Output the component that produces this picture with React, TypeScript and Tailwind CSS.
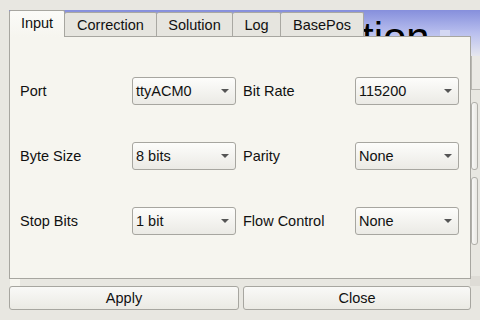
import React from "react";

const tabs = [
  { label: "Input", width: "w-[56px]" },
  { label: "Correction", width: "w-[92px]" },
  { label: "Solution", width: "w-[76px]" },
  { label: "Log", width: "w-[48px]" },
  { label: "BasePos", width: "w-[83px]" },
];

const rows = [
  ["Port", "ttyACM0", "Bit Rate", "115200"],
  ["Byte Size", "8 bits", "Parity", "None"],
  ["Stop Bits", "1 bit", "Flow Control", "None"],
];

function Combo({ value }: { value: string }) {
  return (
    <div className="flex h-[28px] w-[104px] items-center justify-between rounded-[3px] border border-[#a7a6a0] bg-gradient-to-b from-[#fdfdfb] to-[#ebeae5] pl-[3px] pr-[6px]">
      <span className="pt-[1px]">{value}</span>
      <span className="h-0 w-0 border-l-[4px] border-r-[4px] border-t-[4px] border-l-transparent border-r-transparent border-t-[#555]" />
    </div>
  );
}

function Backdrop() {
  // the main window peeking out behind the dialog
  return (
    <div className="absolute inset-0">
      <div className="absolute left-[9px] right-0 top-[10px] h-[46px] bg-gradient-to-b from-[#868fdc] via-[#b9bfee] to-[#e6e7ee]" />
      <div className="absolute left-[440px] top-[30px] h-[18px] w-[10px] bg-[#d4d8f2]" />
      <div className="absolute left-[362px] top-[17px] text-[42px] leading-none text-black">
        tion
      </div>
      <div className="absolute left-[471px] top-[56px] h-[34px] w-[9px] border-b border-l border-[#b9b8b2] bg-[#eae9e4]" />
      <div className="absolute left-[471px] top-[102px] h-[68px] w-[7px] rounded-[3px] border border-[#b0afa9] bg-gradient-to-r from-[#f9f9f7] to-[#e9e8e3]" />
      <div className="absolute left-[471px] top-[177px] h-[68px] w-[7px] rounded-[3px] border border-[#b0afa9] bg-gradient-to-r from-[#f9f9f7] to-[#e9e8e3]" />
      <div className="absolute left-[470px] top-[276px] h-[10px] w-[10px] bg-[#dedcd6]" />
    </div>
  );
}

export default function App() {
  return (
    <div
      className="relative h-[320px] w-[480px] overflow-hidden bg-[#e8e7e1] text-[14.5px] text-[#111]"
      style={{ fontFamily: '"Liberation Sans", Arial, sans-serif' }}
    >
      <Backdrop />

      <div className="absolute inset-0 flex flex-col pl-[9px] pt-[10px]">
        <div className="relative z-10 flex h-[27px] items-start">
          {tabs.map((tab, i) =>
            i === 0 ? (
              <div
                key={tab.label}
                className={`flex h-[27px] ${tab.width} items-center justify-center rounded-t-[2px] border-l border-r border-t border-[#a7a6a0] bg-gradient-to-b from-[#fbfbf8] to-[#f6f5ef]`}
              >
                {tab.label}
              </div>
            ) : (
              <div
                key={tab.label}
                className={`mt-[2px] flex h-[24px] ${tab.width} items-center justify-center rounded-t-[2px] border-r border-t border-[#a9a8a2] bg-[#e6e5df] pt-[2px]`}
              >
                {tab.label}
              </div>
            ),
          )}
        </div>

        <div className="-mt-px flex h-[243px] w-[462px] flex-col gap-[37px] border border-[#a7a6a0] bg-[#f6f5ef] pl-[10px] pt-[40px]">
          {rows.map(([l1, v1, l2, v2]) => (
            <div key={l1} className="flex items-center">
              <span className="w-[112px] pt-[2px]">{l1}</span>
              <Combo value={v1} />
              <span className="ml-[7px] w-[112px] pt-[2px]">{l2}</span>
              <Combo value={v2} />
            </div>
          ))}
        </div>

        <div className="flex h-[7px]">
          <div className="ml-px w-[10px] bg-[#f6f5ef]" />
        </div>

        <div className="flex gap-[4px]">
          <button
            type="button"
            className="h-[24px] w-[230px] rounded-[3px] border border-[#a7a6a0] bg-gradient-to-b from-[#f9f9f7] to-[#ebeae4] pt-[1px]"
          >
            Apply
          </button>
          <button
            type="button"
            className="h-[24px] w-[228px] rounded-[3px] border border-[#a7a6a0] bg-gradient-to-b from-[#f9f9f7] to-[#ebeae4] pt-[1px]"
          >
            Close
          </button>
        </div>
      </div>
    </div>
  );
}
